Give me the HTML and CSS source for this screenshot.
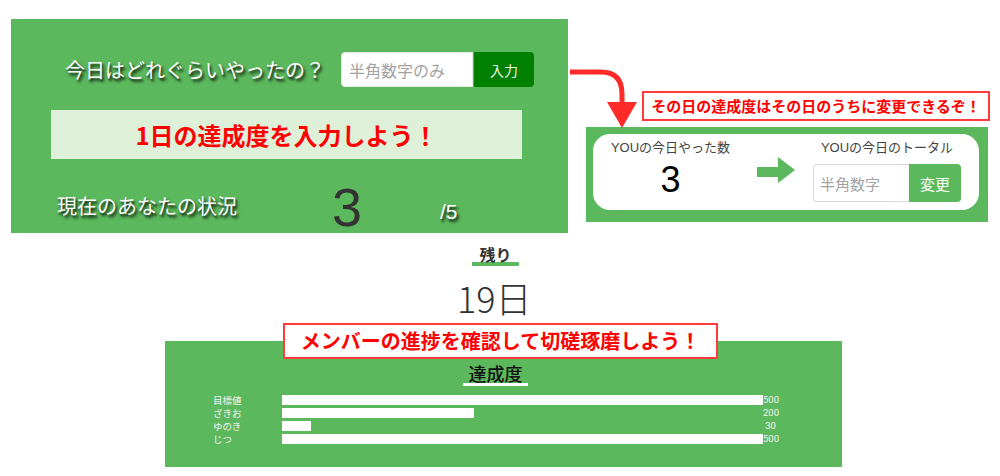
FILE: index.html
```html
<!DOCTYPE html>
<html lang="ja">
<head>
<meta charset="utf-8">
<title>達成度</title>
<link rel="stylesheet" href="styles.css">
</head>
<body>
<div class="page">
  <div class="top">
    <section class="entry">
      <div class="ask">
        <span class="ask-label">今日はどれぐらいやったの？</span>
        <div class="ask-form">
          <input class="ask-input" type="text" placeholder="半角数字のみ">
          <button class="ask-btn" type="button">入力</button>
        </div>
      </div>
      <div class="banner">1日の達成度を入力しよう！</div>
      <div class="status">
        <span class="status-label">現在のあなたの状況</span>
        <span class="status-num">3</span>
        <span class="status-goal">/5</span>
      </div>
    </section>

    <aside class="edit">
      <svg class="curve-arrow" viewBox="566 62 76 68" width="76" height="68" aria-hidden="true">
        <path d="M570 72 L601 72 Q622 72 622 94 L622 104" fill="none" stroke="#ff2b2b" stroke-width="5"/>
        <polygon points="607,102 637,102 622,128" fill="#ff2b2b"/>
      </svg>
      <div class="note note-edit">その日の達成度はその日のうちに変更できるぞ！</div>
      <div class="edit-panel">
        <div class="today-box">
          <div class="today-col">
            <div class="cap">YOUの今日やった数</div>
            <div class="today-num">3</div>
          </div>
          <svg class="green-arrow" viewBox="0 0 38 26" width="38" height="26" aria-hidden="true">
            <rect x="0" y="10" width="22" height="10" fill="#5cb85c"/>
            <polygon points="21,0 38,13 21,26" fill="#5cb85c"/>
          </svg>
          <div class="total-col">
            <div class="cap">YOUの今日のトータル</div>
            <div class="total-form">
              <input class="total-input" type="text" placeholder="半角数字">
              <button class="total-btn" type="button">変更</button>
            </div>
          </div>
        </div>
      </div>
    </aside>
  </div>

  <div class="remain">
    <div class="remain-label">残り</div>
    <div class="remain-days">19日</div>
  </div>

  <section class="progress">
    <div class="note note-members">メンバーの進捗を確認して切磋琢磨しよう！</div>
    <div class="progress-title">達成度</div>
    <div class="chart">
      <span class="chart-label">目標値</span>
      <div class="chart-track"><div class="chart-bar" style="width:100%"></div></div>
      <span class="chart-value">500</span>

      <span class="chart-label">ざきお</span>
      <div class="chart-track"><div class="chart-bar" style="width:40%"></div></div>
      <span class="chart-value">200</span>

      <span class="chart-label">ゆのき</span>
      <div class="chart-track"><div class="chart-bar" style="width:6%"></div></div>
      <span class="chart-value">30</span>

      <span class="chart-label">じつ</span>
      <div class="chart-track"><div class="chart-bar" style="width:100%"></div></div>
      <span class="chart-value">500</span>
    </div>
  </section>
</div>
</body>
</html>
```

FILE: styles.css
```css
* { box-sizing: border-box; }

html, body {
  margin: 0;
  padding: 0;
  background: #ffffff;
}

body {
  width: 1000px;
  height: 476px;
  overflow: hidden;
  font-family: "Noto Sans CJK JP", "Noto Sans", sans-serif;
  color: #333;
}

.page {
  width: 1000px;
}

/* ---------- top row ---------- */
.top {
  display: flex;
  align-items: flex-start;
  padding: 19px 0 0 11px;
  height: 233px;
}

.entry {
  width: 557px;
  height: 214px;
  background: #5cb85c;
  flex: none;
}

.ask {
  display: flex;
  align-items: center;
  padding: 33px 0 0 54px;
}

.ask-label {
  font-size: 20px;
  line-height: 24px;
  color: #fff;
  text-shadow: 2px 3px 3px #1c361c, 1px 2px 2px rgba(0, 0, 0, 0.45);
  white-space: nowrap;
}

.ask-form {
  display: flex;
  margin-left: 16px;
}

.ask-input {
  width: 132px;
  height: 35px;
  border: 1px solid #e6e6e6;
  border-radius: 4px 0 0 4px;
  padding: 0 7px;
  font-family: "Noto Sans CJK JP", sans-serif;
  font-size: 16px;
  color: #333;
  background: #fff;
  outline: none;
}

.ask-input::placeholder,
.total-input::placeholder {
  color: #a3a3a3;
}

.ask-btn {
  width: 60px;
  height: 35px;
  border: 0;
  border-radius: 0 4px 4px 0;
  margin-left: 1px;
  background: #008000;
  color: #e8f5e8;
  font-family: "Noto Sans CJK JP", sans-serif;
  font-size: 14px;
  padding: 0;
}

.banner {
  margin: 23px 0 0 40px;
  width: 471px;
  height: 49px;
  background: #dff0d8;
  color: #ff0000;
  font-size: 24px;
  font-weight: 700;
  line-height: 49px;
  text-align: center;
}

.status {
  display: flex;
  align-items: flex-start;
  padding-left: 46px;
  height: 0;
}

.status-label {
  width: 275px;
  margin-top: 37px;
  font-size: 20px;
  line-height: 20px;
  color: #fff;
  text-shadow: 2px 3px 3px #1c361c, 1px 2px 2px rgba(0, 0, 0, 0.45);
  white-space: nowrap;
}

.status-num {
  width: 108px;
  margin-top: 21px;
  font-family: "Liberation Sans", Arial, sans-serif;
  font-size: 54px;
  line-height: 54px;
  color: #333;
}

.status-goal {
  margin-top: 42px;
  font-family: "Liberation Sans", Arial, sans-serif;
  font-size: 21px;
  line-height: 21px;
  color: #fff;
  text-shadow: 2px 3px 3px #1c361c, 1px 2px 2px rgba(0, 0, 0, 0.45);
}

/* ---------- edit (right) ---------- */
.edit {
  position: relative;
  width: 402px;
  margin-left: 18px;
  padding-top: 72px;
  flex: none;
}

.curve-arrow {
  position: absolute;
  left: -20px;
  top: 43px;
  display: block;
}

.note {
  background: #fff;
  border: 2px solid #ff3b3b;
  color: #ff0000;
  font-weight: 700;
  text-align: center;
  white-space: nowrap;
}

.note-edit {
  margin-left: 56px;
  width: 348px;
  height: 30px;
  font-size: 15px;
  line-height: 26px;
}

.edit-panel {
  margin-top: 6px;
  height: 95px;
  background: #5cb85c;
  padding: 7px 9px 0 7px;
}

.today-box {
  display: flex;
  align-items: flex-start;
  height: 76px;
  background: #fff;
  border-radius: 17px;
  padding: 5px 18px 0 15px;
}

.cap {
  font-family: "Liberation Sans", "Noto Sans CJK JP", sans-serif;
  font-size: 13px;
  line-height: 18px;
  color: #444;
  white-space: nowrap;
  text-align: center;
}

.today-col {
  width: 125px;
  text-align: center;
}

.today-num {
  margin-top: 5px;
  font-family: "Liberation Sans", Arial, sans-serif;
  font-size: 36px;
  line-height: 36px;
  color: #000;
}

.green-arrow {
  display: block;
  margin: 18px 0 0 24px;
  flex: none;
}

.total-col {
  width: 148px;
  margin-left: 18px;
}

.total-form {
  display: flex;
  margin-top: 7px;
}

.total-input {
  width: 96px;
  height: 38px;
  border: 1px solid #d9d9d9;
  border-right: 0;
  border-radius: 4px 0 0 4px;
  padding: 0 6px;
  font-family: "Noto Sans CJK JP", sans-serif;
  font-size: 15px;
  background: #fff;
  outline: none;
}

.total-btn {
  width: 52px;
  height: 38px;
  border: 0;
  border-radius: 0 4px 4px 0;
  background: #5cb85c;
  color: #fff;
  font-family: "Noto Sans CJK JP", sans-serif;
  font-size: 15px;
  padding: 0;
}

/* ---------- remaining days ---------- */
.remain {
  padding-top: 14px;
}

.remain-label {
  width: 47px;
  margin-left: 472px;
  font-size: 16px;
  line-height: 15px;
  font-weight: 700;
  text-align: center;
  color: #333;
  border-bottom: 4px solid #5cb85c;
}

.remain-days {
  margin: 13px 0 0 457px;
  font-size: 36px;
  line-height: 36px;
  font-weight: 300;
  color: #333;
  white-space: nowrap;
}

/* ---------- progress ---------- */
.progress {
  position: relative;
  margin: 26px 0 0 165px;
  width: 677px;
  height: 126px;
  background: #5cb85c;
  padding-top: 23px;
}

.note-members {
  position: absolute;
  left: 118px;
  top: -18px;
  width: 435px;
  height: 36px;
  font-size: 20px;
  line-height: 32px;
}

.progress-title {
  width: 65px;
  margin-left: 298px;
  font-size: 18px;
  line-height: 19px;
  font-weight: 500;
  text-align: center;
  color: #111;
  border-bottom: 3px solid #fff;
}

.chart {
  display: grid;
  grid-template-columns: 69px 481px 15px;
  grid-auto-rows: 10px;
  row-gap: 3px;
  margin: 9px 0 0 48px;
}

.chart-label {
  font-size: 9.5px;
  line-height: 10px;
  color: #f2f2f2;
  white-space: nowrap;
}

.chart-track {
  height: 10px;
}

.chart-bar {
  height: 10px;
  background: #fff;
}

.chart-value {
  font-family: "Roboto", "Liberation Sans", sans-serif;
  font-size: 9.5px;
  line-height: 10px;
  color: #f2f2f2;
  text-align: center;
  white-space: nowrap;
}
```
